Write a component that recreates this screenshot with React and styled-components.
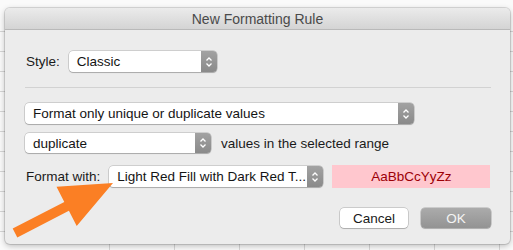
import React from 'react'
import styled, { createGlobalStyle } from 'styled-components'

const Global = createGlobalStyle`
  html, body {
    margin: 0;
    padding: 0;
  }
  body {
    width: 513px;
    height: 250px;
    overflow: hidden;
    font-family: "Liberation Sans", Arial, sans-serif;
    background-color: #fafafa;
  }
`

const Desktop = styled.div`
  position: relative;
  width: 513px;
  height: 250px;
  padding: 8px 3px 6px 5px;
  box-sizing: border-box;
  background-image:
    repeating-linear-gradient(to bottom, transparent 0, transparent 19px, #d6d6d6 19px, #d6d6d6 20px),
    repeating-linear-gradient(to right, transparent 0, transparent 64px, #d6d6d6 64px, #d6d6d6 65px);
  background-size: 513px 242px, 513px 242px;
  background-position: 0 12px, 45px 8px;
  background-repeat: no-repeat;
`

const Dialog = styled.div`
  width: 505px;
  height: 236px;
  background: #ececec;
  border-radius: 5px;
  box-shadow: 0 0 0 1px rgba(0,0,0,0.12), 0 2px 6px rgba(0,0,0,0.25);
  display: flex;
  flex-direction: column;
  overflow: hidden;
`

const TitleBar = styled.div`
  height: 21px;
  flex: none;
  background: linear-gradient(to bottom, #ebebeb, #d4d4d4);
  border-bottom: 1px solid #b9b9b9;
  display: flex;
  align-items: center;
  justify-content: center;
  font-size: 14px;
  color: #4a4a4a;
`

const Body = styled.div`
  padding: 21px 19px 0 20px;
  display: flex;
  flex-direction: column;
`

const Row = styled.div`
  display: flex;
  align-items: center;
  gap: ${p => p.gap || 8}px;
  margin-top: ${p => p.top || 0}px;
  justify-content: ${p => p.end ? 'flex-end' : 'flex-start'};
`

const Label = styled.span`
  font-size: 13.5px;
  color: #1a1a1a;
  padding-left: 1px;
  white-space: nowrap;
  flex: none;
`

const Separator = styled.div`
  height: 1px;
  background: #d2d2d2;
  margin-top: 15px;
`

const SelectBox = styled.div`
  width: ${p => p.w}px;
  height: ${p => p.h || 21}px;
  box-sizing: border-box;
  display: flex;
  background: #ffffff;
  border-radius: 4px;
  box-shadow: 0 0 0 0.5px rgba(0,0,0,0.25), 0 1px 1px rgba(0,0,0,0.18);
  overflow: hidden;
  flex: none;
`

const SelectText = styled.span`
  flex: 1;
  display: flex;
  align-items: center;
  padding-left: 8px;
  font-size: 13.5px;
  color: #141414;
  white-space: nowrap;
`

const Stepper = styled.div`
  width: 16px;
  background: linear-gradient(to bottom, #a2a2a2, #8a8a8a);
  display: flex;
  align-items: center;
  justify-content: center;
`

const Preview = styled.div`
  width: 158px;
  height: 23px;
  flex: none;
  background: #ffc7ce;
  color: #9c0006;
  font-size: 13.5px;
  display: flex;
  align-items: center;
  justify-content: center;
`

const Button = styled.button`
  width: ${p => p.w}px;
  height: 20px;
  border: none;
  border-radius: 4px;
  font-family: inherit;
  font-size: 13.5px;
  padding: 0;
  color: ${p => p.primary ? '#f4f4f4' : '#1a1a1a'};
  background: ${p => p.primary ? 'linear-gradient(to bottom, #ababab, #939393)' : '#ffffff'};
  box-shadow: 0 0 0 0.5px rgba(0,0,0,0.28), 0 1px 1px rgba(0,0,0,0.15);
`

const Arrow = styled.svg`
  position: absolute;
  left: 0;
  top: 0;
  pointer-events: none;
`

const Chevrons = () => (
  <svg width="8" height="12" viewBox="0 0 8 12">
    <path d="M1.5 4.5 L4 2 L6.5 4.5 M1.5 7.5 L4 10 L6.5 7.5" fill="none" stroke="#ffffff" strokeWidth="1.3" />
  </svg>
)

const Select = ({ w, h, children }) => (
  <SelectBox w={w} h={h}>
    <SelectText>{children}</SelectText>
    <Stepper><Chevrons /></Stepper>
  </SelectBox>
)

const App = () => (
  <Desktop>
    <Global />
    <Dialog>
      <TitleBar>New Formatting Rule</TitleBar>
      <Body>
        <Row gap={9}>
          <Label>Style:</Label>
          <Select w={148}>Classic</Select>
        </Row>
        <Separator />
        <Row top={15}>
          <Select w={389}>Format only unique or duplicate values</Select>
        </Row>
        <Row top={9} gap={9}>
          <Select w={186} h={20}>duplicate</Select>
          <Label>values in the selected range</Label>
        </Row>
        <Row top={12} gap={9}>
          <Label>Format with:</Label>
          <Select w={214}>Light Red Fill with Dark Red T...</Select>
          <Preview>AaBbCcYyZz</Preview>
        </Row>
        <Row top={20} gap={13} end>
          <Button w={68}>Cancel</Button>
          <Button w={70} primary>OK</Button>
        </Row>
      </Body>
    </Dialog>
    <Arrow width="513" height="250" viewBox="0 0 513 250">
      <polygon
        points="12.7,228.6 64.3,202 56.5,186.8 113,183 76.7,226 68.9,210.8 17.3,237.4"
        fill="#fb7f24"
      />
    </Arrow>
  </Desktop>
)

export default App
